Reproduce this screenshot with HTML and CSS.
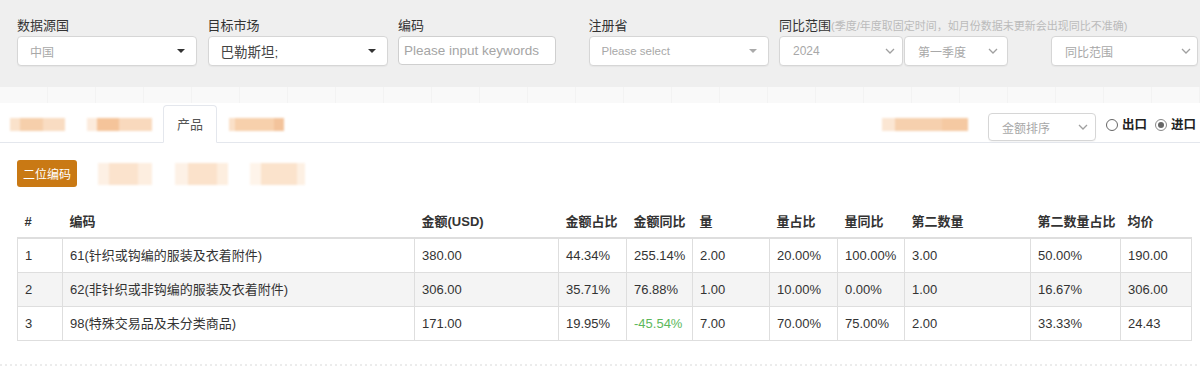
FILE: index.html
```html
<!DOCTYPE html>
<html lang="zh-CN">
<head>
    <meta charset="UTF-8">
    <meta name="viewport" content="width=device-width, initial-scale=1.0">
    <title>进出口数据</title>
    <link rel="stylesheet" href="styles.css">
</head>
<body>
    <div class="filters">
        <div class="field">
            <label>数据源国</label>
            <div class="select">
                <span class="placeholder">中国</span>
                <span class="caret"></span>
            </div>
        </div>
        <div class="field">
            <label>目标市场</label>
            <div class="select">
                <span class="value">巴勒斯坦;</span>
                <span class="caret"></span>
            </div>
        </div>
        <div class="field">
            <label>编码</label>
            <input class="keyword" type="text" placeholder="Please input keywords">
        </div>
        <div class="field">
            <label>注册省</label>
            <div class="select">
                <span class="placeholder latin">Please select</span>
                <span class="caret light"></span>
            </div>
        </div>
        <div class="field range">
            <label>同比范围<small>(季度/年度取固定时间，如月份数据未更新会出现同比不准确)</small></label>
            <div class="range-row">
                <div class="select year">
                    <span class="placeholder">2024</span>
                    <svg class="chevron" width="10" height="6" viewBox="0 0 10 6"><path d="M1 1l4 4 4-4" /></svg>
                </div>
                <div class="select quarter">
                    <span class="placeholder">第一季度</span>
                    <svg class="chevron" width="10" height="6" viewBox="0 0 10 6"><path d="M1 1l4 4 4-4" /></svg>
                </div>
                <div class="select compare">
                    <span class="placeholder">同比范围</span>
                    <svg class="chevron" width="10" height="6" viewBox="0 0 10 6"><path d="M1 1l4 4 4-4" /></svg>
                </div>
            </div>
        </div>
    </div>

    <div class="ghost-strip"></div>

    <div class="tabs-bar">
        <span class="blur tab-blur t1"></span>
        <span class="blur tab-blur t2"></span>
        <div class="tab active">产品</div>
        <span class="blur tab-blur t4"></span>

        <div class="tabs-right">
            <span class="blur tab-blur r1"></span>
            <div class="select sort">
                <span class="placeholder">金额排序</span>
                <svg class="chevron" width="10" height="6" viewBox="0 0 10 6"><path d="M1 1l4 4 4-4" /></svg>
            </div>
            <label class="radio"><span class="dot"></span>出口</label>
            <label class="radio checked"><span class="dot"></span>进口</label>
        </div>
    </div>

    <div class="toolbar">
        <button class="btn-level">二位编码</button>
        <span class="blur bar-blur b1"></span>
        <span class="blur bar-blur b2"></span>
        <span class="blur bar-blur b3"></span>
    </div>

    <table class="data">
        <thead>
            <tr>
                <th class="c-idx">#</th>
                <th class="c-code">编码</th>
                <th class="c-amt">金额(USD)</th>
                <th class="c-share">金额占比</th>
                <th class="c-yoy">金额同比</th>
                <th class="c-qty">量</th>
                <th class="c-qshare">量占比</th>
                <th class="c-qyoy">量同比</th>
                <th class="c-q2">第二数量</th>
                <th class="c-q2share">第二数量占比</th>
                <th class="c-price">均价</th>
            </tr>
        </thead>
        <tbody>
            <tr>
                <td>1</td>
                <td>61(针织或钩编的服装及衣着附件)</td>
                <td>380.00</td>
                <td>44.34%</td>
                <td>255.14%</td>
                <td>2.00</td>
                <td>20.00%</td>
                <td>100.00%</td>
                <td>3.00</td>
                <td>50.00%</td>
                <td>190.00</td>
            </tr>
            <tr>
                <td>2</td>
                <td>62(非针织或非钩编的服装及衣着附件)</td>
                <td>306.00</td>
                <td>35.71%</td>
                <td>76.88%</td>
                <td>1.00</td>
                <td>10.00%</td>
                <td>0.00%</td>
                <td>1.00</td>
                <td>16.67%</td>
                <td>306.00</td>
            </tr>
            <tr>
                <td>3</td>
                <td>98(特殊交易品及未分类商品)</td>
                <td>171.00</td>
                <td>19.95%</td>
                <td class="down">-45.54%</td>
                <td>7.00</td>
                <td>70.00%</td>
                <td>75.00%</td>
                <td>2.00</td>
                <td>33.33%</td>
                <td>24.43</td>
            </tr>
        </tbody>
    </table>

    <div class="bottom-strip"></div>
</body>
</html>
```

FILE: styles.css
```css
body {
    margin: 0;
    font-family: "Liberation Sans", "Noto Sans CJK SC", sans-serif;
    color: #333;
    background: white;
}

/* filter panel */
.filters {
    display: flex;
    gap: 10.5px;
    background: #efefef;
    padding: 16px 0 21px 17px;
    height: 50px;
}

.field {
    width: 180px;
    display: flex;
    flex-direction: column;
}

.field label {
    font-size: 13px;
    line-height: 20px;
    height: 20px;
    color: #333;
    white-space: nowrap;
}

.field label small {
    font-size: 11px;
    color: #bbb;
}

.select {
    box-sizing: border-box;
    height: 30px;
    background: white;
    border: 1px solid #d6d6d6;
    border-radius: 4px;
    box-shadow: 0 1px 1px rgba(0,0,0,0.04);
    display: flex;
    align-items: center;
    justify-content: space-between;
    padding: 0 11px 0 12px;
}

.placeholder {
    font-size: 12px;
    color: #a8a8a8;
}

.placeholder.latin {
    font-size: 11.5px;
}

.value {
    font-size: 13.5px;
    color: #444;
}

.caret {
    width: 0;
    height: 0;
    border-left: 4px solid transparent;
    border-right: 4px solid transparent;
    border-top: 4px solid #333;
}

.caret.light {
    border-top-color: #aaa;
}

.chevron path {
    fill: none;
    stroke: #a0a0a0;
    stroke-width: 1.3;
}

.keyword {
    box-sizing: border-box;
    width: 158px;
    height: 29px;
    border: 1px solid #cfcfcf;
    border-radius: 4px;
    padding: 0 5px;
    font-family: "Liberation Sans", sans-serif;
    font-size: 13.5px;
    outline: none;
}

.keyword::placeholder {
    color: #a5a5a5;
}

.field.range {
    width: auto;
}

.range-row {
    display: flex;
}

.range-row .select {
    padding: 0 7px 0 13px;
}

.select.year {
    width: 124px;
}

.select.quarter {
    width: 104px;
    margin-left: 1px;
    padding-right: 9px;
}

.select.compare {
    width: 147px;
    margin-left: 43px;
    padding-right: 6px;
}

.ghost-strip {
    height: 16px;
    background-color: #f9f9f9;
    background-image: repeating-linear-gradient(90deg, transparent 0, transparent 47px, #f3f3f3 47px, #f3f3f3 48px);
}

/* blurred placeholders */
.blur {
    display: block;
    filter: blur(1px);
}

.tab-blur {
    height: 13px;
    margin-bottom: 11px;
}

.t1 {
    width: 55px;
    margin-left: 10px;
    background: linear-gradient(90deg, #fae2cb 0 18%, #f6cfab 18% 60%, #f9dcc2 60% 100%);
}

.t2 {
    width: 65px;
    margin-left: 22px;
    background: linear-gradient(90deg, #fcebdc 0 15%, #f5c49a 15% 50%, #f9d9bd 50% 100%);
}

.t4 {
    width: 55px;
    margin-left: 12px;
    background: linear-gradient(90deg, #fae0c8 0 10%, #f7d0ac 10% 82%, #f3c39b 82% 100%);
}

.r1 {
    width: 86px;
    margin-right: 20px;
    background: linear-gradient(90deg, #fbe6d3 0 15%, #f6d0ae 15% 70%, #f5c9a2 70% 100%);
}

/* tabs */
.tabs-bar {
    display: flex;
    align-items: flex-end;
    height: 39px;
    border-bottom: 1px solid #e4e7ed;
}

.tab {
    font-family: "Noto Sans CJK SC", sans-serif;
    font-size: 13px;
    color: #555;
    height: 36px;
    line-height: 36px;
    padding: 0 13px;
    margin-left: 11px;
    margin-bottom: -1px;
    border: 1px solid #e4e7ed;
    border-bottom-color: white;
    border-radius: 4px 4px 0 0;
    background: white;
}

.tabs-right {
    margin-left: auto;
    display: flex;
    align-items: flex-end;
    padding-right: 4px;
}

.select.sort {
    width: 108px;
    height: 28px;
    margin-bottom: 1px;
    margin-right: 10px;
    padding: 0 7px 0 13px;
}

.radio {
    display: flex;
    align-items: center;
    font-size: 12.5px;
    font-weight: bold;
    color: #222;
    line-height: 20px;
    margin-bottom: 7px;
    gap: 4px;
}

.radio + .radio {
    margin-left: 8px;
}

.radio .dot {
    box-sizing: border-box;
    width: 12px;
    height: 12px;
    border: 1px solid #666;
    border-radius: 50%;
    display: flex;
    align-items: center;
    justify-content: center;
}

.radio.checked .dot {
    border-color: #888;
}

.radio.checked .dot::after {
    content: "";
    width: 6px;
    height: 6px;
    border-radius: 50%;
    background: #666;
}

/* toolbar */
.toolbar {
    display: flex;
    align-items: center;
    margin-top: 17px;
    padding-left: 17px;
    height: 27px;
}

.btn-level {
    width: 60px;
    height: 27px;
    padding: 0;
    border: none;
    border-radius: 3px;
    background: #c97914;
    color: white;
    font-family: "Noto Sans CJK SC", sans-serif;
    font-size: 12px;
}

.bar-blur {
    height: 22px;
}

.b1 {
    width: 54px;
    margin-left: 21px;
    background: linear-gradient(90deg, #fdf0e4 0 20%, #fbe3cd 20% 75%, #fdeee0 75% 100%);
}

.b2 {
    width: 53px;
    margin-left: 23px;
    background: linear-gradient(90deg, #fdf1e6 0 25%, #fbe2cb 25% 80%, #fdeedf 80% 100%);
}

.b3 {
    width: 55px;
    margin-left: 22px;
    background: linear-gradient(90deg, #fef4ea 0 20%, #fbe3cc 20% 85%, #fdf0e3 85% 100%);
}

/* table */
.data {
    margin: 18px 0 0 17px;
    width: 1174px;
    table-layout: fixed;
    border-collapse: collapse;
    font-size: 13px;
}

.data th {
    box-sizing: border-box;
    text-align: left;
    font-weight: bold;
    line-height: 20px;
    padding: 7px 7px 5px;
    border-bottom: 2px solid #dedede;
    white-space: nowrap;
}

.data td {
    line-height: 20px;
    padding: 7px 7px 6px;
    border: 1px solid #dedede;
    color: #333;
    white-space: nowrap;
}

.data tbody tr:nth-child(2) td {
    background: #f4f4f4;
}

.data td.down {
    color: #5cb85c;
}

.c-idx { width: 45px; }
.c-code { width: 352px; }
.c-amt { width: 144px; }
.c-share { width: 68px; }
.c-yoy { width: 66px; }
.c-qty { width: 77px; }
.c-qshare { width: 68px; }
.c-qyoy { width: 67px; }
.c-q2 { width: 126px; }
.c-q2share { width: 90px; }
.c-price { width: 71px; }

.bottom-strip {
    margin-top: 23px;
    height: 2px;
    background-image: repeating-linear-gradient(90deg, #ececec 0, #ececec 2px, transparent 2px, transparent 5px);
}
```
